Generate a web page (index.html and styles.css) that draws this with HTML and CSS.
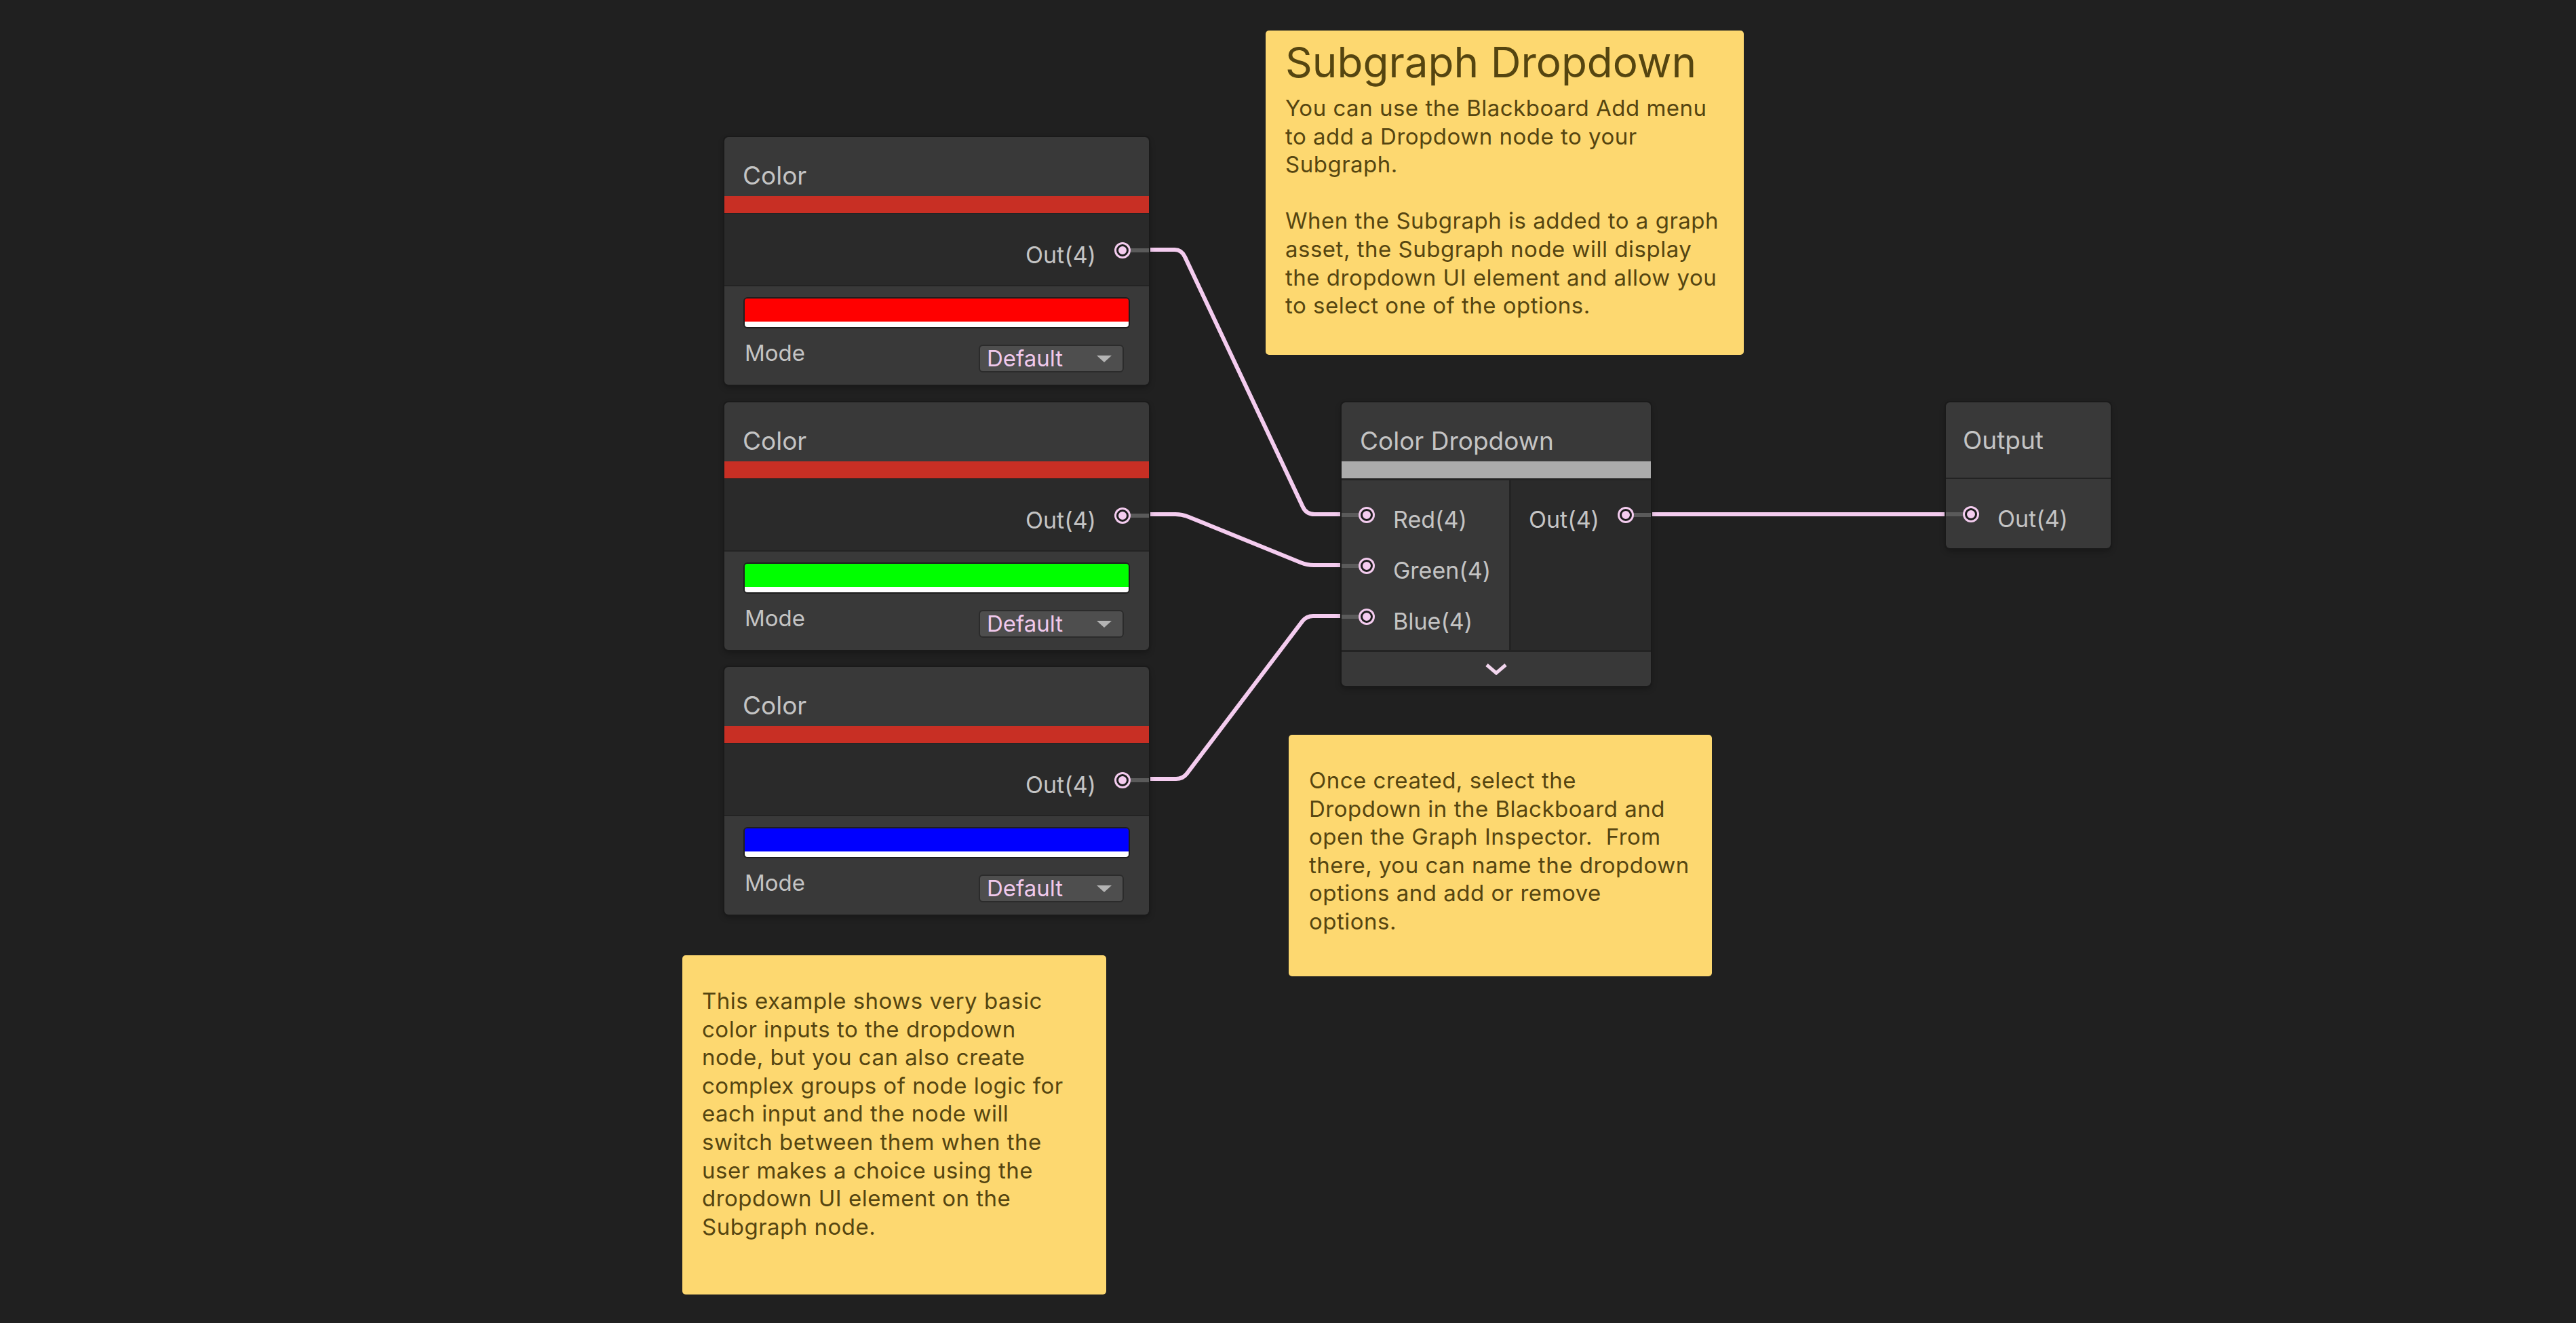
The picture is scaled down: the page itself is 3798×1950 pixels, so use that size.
FILE: index.html
```html
<!DOCTYPE html>
<html lang="en">

<head>
    <meta charset="UTF-8">
    <meta name="viewport" content="width=device-width, initial-scale=1.0">
    <title>Subgraph Dropdown</title>
    <link rel="stylesheet" href="styles.css">
</head>

<body>
    <div class="graph">
        <!-- edges between the nodes -->
        <svg class="wires" width="3798" height="1950" viewBox="0 0 3798 1950">
            <path d="M1694 368 H1732 Q1742 368 1747 378.6 L1921 747.4 Q1926 758 1938 758 H1978" />
            <path d="M1694 758 H1733 Q1743 758 1752 761.7 L1918 829.3 Q1927 833 1937 833 H1978" />
            <path d="M1694 1148 H1734 Q1744 1148 1750 1140.1 L1920 915.9 Q1926 908 1936 908 H1978" />
            <path d="M2434 758 H2869" />
        </svg>

        <div class="sticky sticky-intro">
            <h1>Subgraph Dropdown</h1>
            <p>You can use the Blackboard Add menu<br>to add a Dropdown node to your<br>Subgraph.</p>
            <p>When the Subgraph is added to a graph<br>asset, the Subgraph node will display<br>the dropdown UI element and allow you<br>to select one of the options.</p>
        </div>

        <div class="sticky sticky-inspector">
            <p>Once created, select the<br>Dropdown in the Blackboard and<br>open the Graph Inspector.&nbsp; From<br>there, you can name the dropdown<br>options and add or remove<br>options.</p>
        </div>

        <div class="sticky sticky-example">
            <p>This example shows very basic<br>color inputs to the dropdown<br>node, but you can also create<br>complex groups of node logic for<br>each input and the node will<br>switch between them when the<br>user makes a choice using the<br>dropdown UI element on the<br>Subgraph node.</p>
        </div>

        <!-- Color property nodes -->
        <div class="node color-node node-red">
            <div class="node-title">Color</div>
            <div class="node-bar bar-red"></div>
            <div class="node-outputs">
                <div class="slot slot-out">
                    <span class="slot-label">Out(4)</span>
                    <span class="port"></span>
                    <span class="stub"></span>
                </div>
            </div>
            <div class="node-controls">
                <div class="swatch">
                    <div class="swatch-color swatch-red"></div>
                    <div class="swatch-alpha"></div>
                </div>
                <div class="mode-row">
                    <span class="mode-label">Mode</span>
                    <div class="select"><span>Default</span><span class="select-arrow"></span></div>
                </div>
            </div>
        </div>

        <div class="node color-node node-green">
            <div class="node-title">Color</div>
            <div class="node-bar bar-red"></div>
            <div class="node-outputs">
                <div class="slot slot-out">
                    <span class="slot-label">Out(4)</span>
                    <span class="port"></span>
                    <span class="stub"></span>
                </div>
            </div>
            <div class="node-controls">
                <div class="swatch">
                    <div class="swatch-color swatch-green"></div>
                    <div class="swatch-alpha"></div>
                </div>
                <div class="mode-row">
                    <span class="mode-label">Mode</span>
                    <div class="select"><span>Default</span><span class="select-arrow"></span></div>
                </div>
            </div>
        </div>

        <div class="node color-node node-blue">
            <div class="node-title">Color</div>
            <div class="node-bar bar-red"></div>
            <div class="node-outputs">
                <div class="slot slot-out">
                    <span class="slot-label">Out(4)</span>
                    <span class="port"></span>
                    <span class="stub"></span>
                </div>
            </div>
            <div class="node-controls">
                <div class="swatch">
                    <div class="swatch-color swatch-blue"></div>
                    <div class="swatch-alpha"></div>
                </div>
                <div class="mode-row">
                    <span class="mode-label">Mode</span>
                    <div class="select"><span>Default</span><span class="select-arrow"></span></div>
                </div>
            </div>
        </div>

        <!-- Dropdown node -->
        <div class="node dropdown-node">
            <div class="node-title">Color Dropdown</div>
            <div class="node-bar bar-gray"></div>
            <div class="node-body">
                <div class="node-inputs">
                    <div class="slot slot-in">
                        <span class="stub stub-in"></span>
                        <span class="port"></span>
                        <span class="slot-label">Red(4)</span>
                    </div>
                    <div class="slot slot-in">
                        <span class="stub stub-in"></span>
                        <span class="port"></span>
                        <span class="slot-label">Green(4)</span>
                    </div>
                    <div class="slot slot-in">
                        <span class="stub stub-in"></span>
                        <span class="port"></span>
                        <span class="slot-label">Blue(4)</span>
                    </div>
                </div>
                <div class="node-outputs dropdown-outputs">
                    <div class="slot slot-out">
                        <span class="slot-label">Out(4)</span>
                        <span class="port"></span>
                        <span class="stub stub-short"></span>
                    </div>
                </div>
            </div>
            <div class="node-footer">
                <svg width="34" height="18" viewBox="0 0 34 18">
                    <polyline points="3,3 17,15 31,3" />
                </svg>
            </div>
        </div>

        <!-- Subgraph output -->
        <div class="node output-node">
            <div class="node-title output-title">Output</div>
            <div class="output-body">
                <div class="slot slot-in">
                    <span class="stub stub-in"></span>
                    <span class="port"></span>
                    <span class="slot-label">Out(4)</span>
                </div>
            </div>
        </div>
    </div>
</body>

</html>
```

FILE: styles.css
```css
body {
    margin: 0;
    background-color: #202020;
    font-family: Inter, "Noto Sans", sans-serif;
    overflow: hidden;
}

.graph {
    position: relative;
    width: 3798px;
    height: 1950px;
}

.wires {
    position: absolute;
    top: 0;
    left: 0;
}

.wires path {
    fill: none;
    stroke: #f4ccef;
    stroke-width: 6;
    stroke-linejoin: round;
}

/* sticky notes */
.sticky {
    position: absolute;
    box-sizing: border-box;
    background-color: #fdd870;
    color: #554510;
    border-radius: 5px;
    white-space: nowrap;
}

.sticky h1 {
    margin: 0 0 16px;
    font-size: 62px;
    font-weight: normal;
    line-height: 62px;
}

.sticky p {
    margin: 0;
    font-size: 33px;
    letter-spacing: 0.5px;
    line-height: 41.6px;
}

.sticky p + p {
    margin-top: 41.6px;
}

.sticky-intro {
    left: 1866px;
    top: 45px;
    width: 705px;
    height: 478px;
    padding: 16px 20px 0 29px;
}

.sticky-inspector {
    left: 1900px;
    top: 1083px;
    width: 624px;
    height: 356px;
    padding: 47px 20px 0 30px;
}

.sticky-example {
    left: 1006px;
    top: 1408px;
    width: 625px;
    height: 500px;
    padding: 47px 20px 0 29px;
}

/* nodes */
.node {
    position: absolute;
    display: flex;
    flex-direction: column;
    border-radius: 6px;
    overflow: hidden;
    box-shadow: 0 0 0 2px #1a1a1a, 0 4px 10px rgba(0, 0, 0, 0.3);
    color: #c4c4c4;
}

.node-title {
    box-sizing: border-box;
    height: 87px;
    padding: 35px 0 0 27px;
    background-color: #393939;
    font-size: 37px;
    line-height: 44px;
}

.node-bar {
    height: 25px;
}

.bar-red {
    background-color: #c82f24;
}

.bar-gray {
    background-color: #ababab;
}

.slot {
    display: flex;
    align-items: center;
    height: 75px;
}

.slot-out {
    justify-content: flex-end;
}

.slot-label {
    font-size: 34px;
    line-height: 61px;
    padding-top: 14px;
}

.port {
    width: 12px;
    height: 12px;
    border-radius: 50%;
    background-color: #f4ccef;
    border: 3px solid #1e1e1e;
    box-shadow: 0 0 0 3px #f4ccef;
}

.slot-out .port {
    margin-left: 30px;
}

.slot-in .port {
    margin-right: 30px;
}

.stub {
    width: 27px;
    height: 6px;
    margin-left: 3px;
    background-color: #5a5a5a;
}

.stub-in {
    width: 25px;
    margin-left: 0;
    margin-right: 3px;
}

.stub-short {
    width: 25px;
}

.color-node {
    left: 1068px;
    width: 626px;
    height: 365px;
}

.node-red {
    top: 202px;
}

.node-green {
    top: 593px;
}

.node-blue {
    top: 983px;
}

.color-node .node-outputs {
    box-sizing: border-box;
    height: 106px;
    padding-top: 16px;
    border-top: 1px solid #232323;
    background-color: #2a2a2a;
}

.node-controls {
    flex: 1;
    padding: 16px 28px 0;
    border-top: 2px solid #232323;
    background-color: #393939;
}

.swatch {
    display: flex;
    flex-direction: column;
    height: 42px;
    border: 2px solid #1e1e1e;
    border-radius: 6px;
    overflow: hidden;
}

.swatch-color {
    flex: 1;
}

.swatch-red {
    background-color: #ff0000;
}

.swatch-green {
    background-color: #00ff00;
}

.swatch-blue {
    background-color: #0000ff;
}

.swatch-alpha {
    height: 8px;
    background-color: #fff;
}

.mode-row {
    display: flex;
    justify-content: space-between;
    align-items: flex-start;
    margin-top: 24px;
    padding: 0 9px 0 2px;
}

.mode-label {
    margin-top: -8px;
    font-size: 33px;
    line-height: 41px;
}

.select {
    box-sizing: border-box;
    display: flex;
    justify-content: space-between;
    align-items: center;
    width: 214px;
    height: 41px;
    padding: 0 16px 0 10px;
    border: 2px solid #2b2b2b;
    border-radius: 6px;
    background-color: #4e4e4e;
    color: #f0c9ec;
    font-size: 33px;
    line-height: 37px;
}

.select-arrow {
    width: 0;
    height: 0;
    border-left: 11px solid transparent;
    border-right: 11px solid transparent;
    border-top: 10px solid #b4b4b4;
}

.dropdown-node {
    left: 1978px;
    top: 593px;
    width: 456px;
    height: 418px;
}

.node-body {
    display: flex;
    height: 253px;
    box-sizing: border-box;
    border-top: 3px solid #232323;
}

.node-inputs {
    width: 247px;
    padding-top: 13px;
    background-color: #383838;
}

.dropdown-outputs {
    flex: 1;
    padding-top: 13px;
    border-left: 3px solid #232323;
    background-color: #2a2a2a;
}

.node-footer {
    display: flex;
    justify-content: center;
    align-items: center;
    height: 50px;
    border-top: 3px solid #232323;
    background-color: #383838;
}

.node-footer polyline {
    fill: none;
    stroke: #f2d6ee;
    stroke-width: 5;
    stroke-linejoin: miter;
}

.output-node {
    left: 2869px;
    top: 593px;
    width: 243px;
    height: 215px;
}

.output-title {
    height: 111px;
    padding-top: 34px;
    padding-left: 25px;
}

.output-body {
    flex: 1;
    padding-top: 14px;
    border-top: 2px solid #232323;
    background-color: #393939;
}
```
